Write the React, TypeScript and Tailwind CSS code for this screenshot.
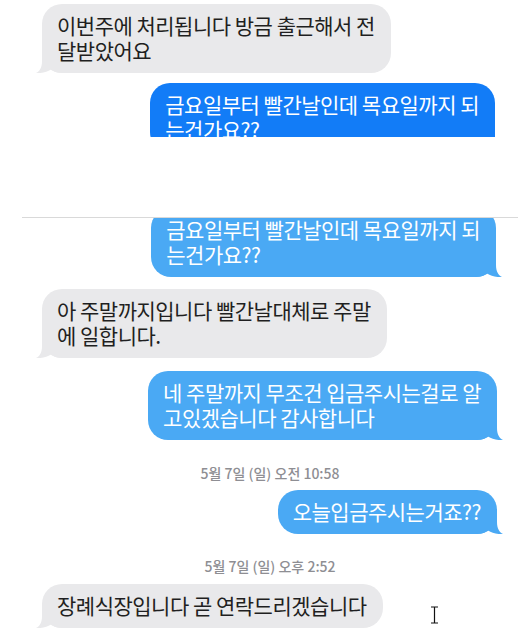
import React from "react";

function Tail({ side, color }: { side: "left" | "right"; color: string }) {
  return (
    <svg
      width="30"
      height="20"
      viewBox="0 0 30 20"
      className={
        side === "left"
          ? "absolute left-[-6px] bottom-0"
          : "absolute right-[-6px] bottom-0 scale-x-[-1]"
      }
    >
      <path
        d="M6 0 L6 8 C6 14 4 18 0 20 C6 20.5 11 19 15 16.5 C18 19 22 20 30 20 L30 0 Z"
        fill={color}
      />
    </svg>
  );
}

function Bubble({
  side,
  color,
  lines,
  className = "",
}: {
  side: "left" | "right";
  color: string;
  lines: string[];
  className?: string;
}) {
  const isLeft = side === "left";
  return (
    <div
      className={
        "relative rounded-[20px] pt-[9px] pb-[10px] pl-[15px] pr-[16px] text-[21px] leading-[25px] tracking-[-0.5px] whitespace-nowrap " +
        (isLeft ? "text-[#1f1f21] self-start ml-[20px] " : "text-white self-end mr-[21px] ") +
        className
      }
      style={{ backgroundColor: color }}
    >
      <Tail side={side} color={color} />
      <span className="relative">
        {lines.map((l, i) => (
          <React.Fragment key={i}>
            {i > 0 && <br />}
            {l}
          </React.Fragment>
        ))}
      </span>
    </div>
  );
}

export default function App() {
  const gray = "#e9e9eb";
  const blueDark = "#127cf7";
  const blueLight = "#4aa9f4";
  return (
    <div className="relative w-[520px] h-[636px] bg-white overflow-hidden font-['Noto_Sans_CJK_KR','Noto_Sans',sans-serif]">
      <div className="ml-[22px] w-[496px] flex flex-col">
        {/* first screenshot piece */}
        <div className="h-[137px] overflow-hidden flex flex-col pt-[4px]">
          <Bubble
            side="left"
            color={gray}
            lines={["이번주에 처리됩니다 방금 출근해서 전", "달받았어요"]}
          />
          <Bubble
            side="right"
            color={blueDark}
            className="mt-[10px] mr-[23px]"
            lines={["금요일부터 빨간날인데 목요일까지 되", "는건가요??"]}
          />
        </div>
        <div className="h-[80px]" />
        <div className="h-px bg-[#d9d9d9]" />
        {/* second screenshot piece */}
        <div className="overflow-hidden flex flex-col">
          <Bubble
            side="right"
            color={blueLight}
            className="mt-[-10px] mr-[22px]"
            lines={["금요일부터 빨간날인데 목요일까지 되", "는건가요??"]}
          />
          <Bubble
            side="left"
            color={gray}
            className="mt-[12px]"
            lines={["아 주말까지입니다 빨간날대체로 주말", "에 일합니다."]}
          />
          <Bubble
            side="right"
            color={blueLight}
            className="mt-[13px]"
            lines={["네 주말까지 무조건 입금주시는걸로 알", "고있겠습니다 감사합니다"]}
          />
          <div className="mt-[25px] text-center text-[14px] leading-[16px] font-medium text-[#8e8e93]">
            5월 7일 (일) 오전 10:58
          </div>
          <Bubble
            side="right"
            color={blueLight}
            className="mt-[9px]"
            lines={["오늘입금주시는거죠??"]}
          />
          <div className="mt-[24px] text-center text-[14px] leading-[16px] font-medium text-[#8e8e93]">
            5월 7일 (일) 오후 2:52
          </div>
          <Bubble
            side="left"
            color={gray}
            className="mt-[10px] ml-[18px]"
            lines={["장례식장입니다 곧 연락드리겠습니다"]}
          />
        </div>
      </div>
      {/* mouse text cursor */}
      <svg
        width="9"
        height="18"
        viewBox="0 0 9 18"
        className="absolute left-[430px] top-[606px]"
      >
        <path d="M1 1 H8 M4.5 1 V17 M1 17 H8" stroke="#111" strokeWidth="1.2" fill="none" />
      </svg>
    </div>
  );
}
